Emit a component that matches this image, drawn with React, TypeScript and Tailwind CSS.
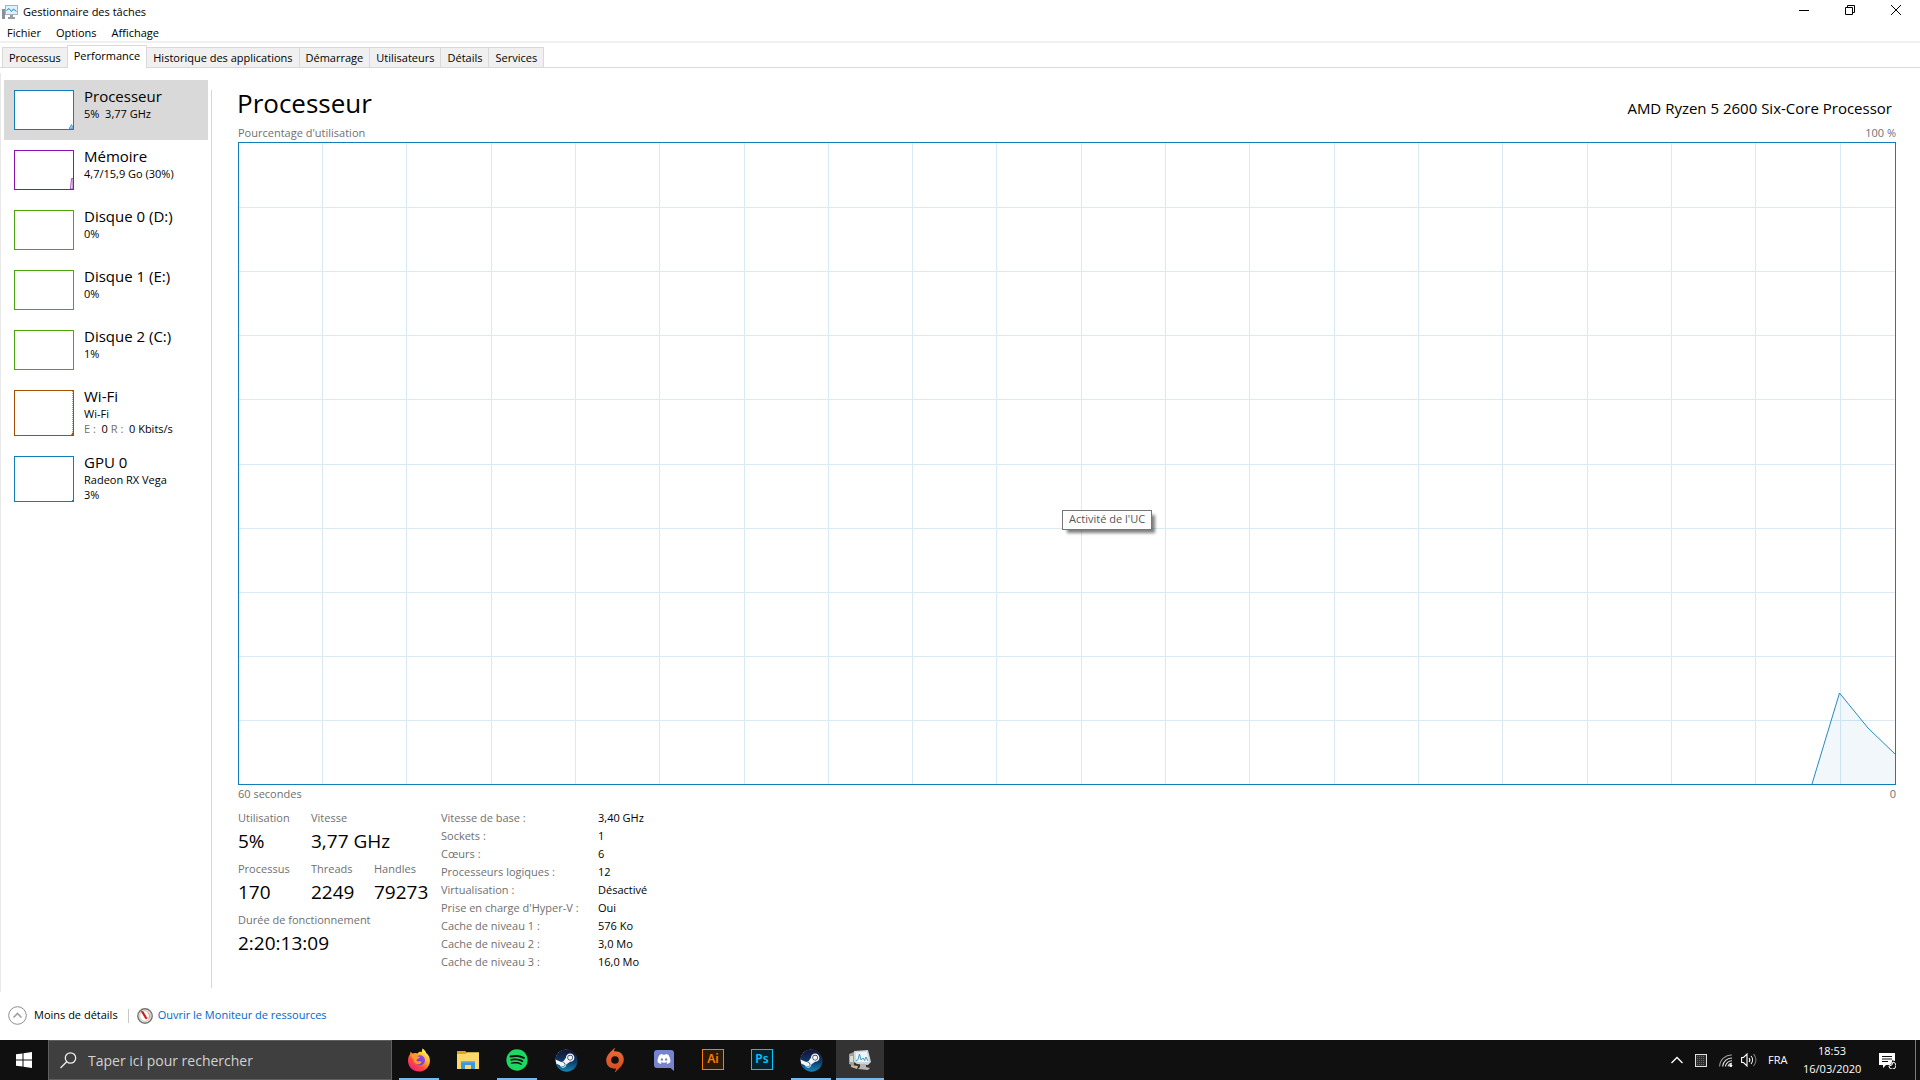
import type { ReactNode } from "react";
import { FaDiscord, FaSpotify, FaSteam } from "react-icons/fa";

type Resource = {
  name: string;
  lines: ReactNode[];
  border: string;
  trace?: ReactNode;
  tall?: boolean;
  selected?: boolean;
};

const resources: Resource[] = [
  {
    name: "Processeur",
    lines: ["5%  3,77 GHz"],
    border: "border-[#117dbb]",
    selected: true,
    trace: <path d="M54.5 38V37L56.5 33.5L58 36V38Z" fill="#9cc9e4" stroke="#4f9fce" />,
  },
  {
    name: "Mémoire",
    lines: ["4,7/15,9 Go (30%)"],
    border: "border-[#8b12ae]",
    trace: <path d="M55.5 38L56.5 27.5H58V38Z" fill="#f4f2f4" stroke="#a850c2" />,
  },
  { name: "Disque 0 (D:)", lines: ["0%"], border: "border-[#4da60c]" },
  { name: "Disque 1 (E:)", lines: ["0%"], border: "border-[#4da60c]" },
  { name: "Disque 2 (C:)", lines: ["1%"], border: "border-[#4da60c]" },
  {
    name: "Wi-Fi",
    lines: [
      "Wi-Fi",
      <>
        <span className="text-[#707070]">E : </span> 0 <span className="text-[#707070]">R : </span> 0 Kbits/s
      </>,
    ],
    border: "border-[#a74f01]",
    tall: true,
    trace: (
      <>
        <path d="M57.5 0V44" stroke="#cf9a70" strokeDasharray="1 1" />
        <path d="M56 44L58 41V44Z" fill="#a74f01" />
      </>
    ),
  },
  {
    name: "GPU 0",
    lines: ["Radeon RX Vega", "3%"],
    border: "border-[#117dbb]",
    tall: true,
    trace: <path d="M57 43H58V44H57Z" fill="#117dbb" />,
  },
];

const tabs = ["Processus", "Performance", "Historique des applications", "Démarrage", "Utilisateurs", "Détails", "Services"];

const details: [string, string][] = [
  ["Vitesse de base :", "3,40 GHz"],
  ["Sockets :", "1"],
  ["Cœurs :", "6"],
  ["Processeurs logiques :", "12"],
  ["Virtualisation :", "Désactivé"],
  ["Prise en charge d'Hyper-V :", "Oui"],
  ["Cache de niveau 1 :", "576 Ko"],
  ["Cache de niveau 2 :", "3,0 Mo"],
  ["Cache de niveau 3 :", "16,0 Mo"],
];

function MonitorIcon() {
  return (
    <svg className="h-4 w-4" viewBox="0 0 16 16" aria-hidden="true">
      <rect x="0" y="5" width="3" height="10" fill="#8d8f91" />
      <rect x="1" y="6" width="1" height="2" fill="#58c43c" />
      <rect x="3" y="1" width="13" height="10" fill="#a9b2b8" />
      <rect x="4" y="2" width="11" height="8" fill="#dff1fa" />
      <path d="M4.500 6.500L7 4.500L9.500 7.500L11.500 5L14.500 7.500" fill="none" stroke="#1b86c4" />
      <path d="M8 11H11V13H13V15H6V13H8Z" fill="#9a9c9e" />
    </svg>
  );
}

function TitleBar() {
  return (
    <header className="flex h-6 items-center justify-between pr-[1px] pl-[2px]">
      <div className="flex items-center gap-[5px]">
        <MonitorIcon />
        <h1>Gestionnaire des tâches</h1>
      </div>
      <div className="flex self-start">
        <button aria-label="Réduire" className="flex h-5 w-[46px] items-center justify-center">
          <svg width="10" height="10" viewBox="0 0 10 10"><path d="M0 5.500H10" stroke="#000" /></svg>
        </button>
        <button aria-label="Niveau inférieur" className="flex h-5 w-[46px] items-center justify-center">
          <svg width="10" height="10" viewBox="0 0 10 10"><path d="M0.500 2.500H7.500V9.500H0.500ZM2.500 2.500V0.500H9.500V7.500H7.500" fill="none" stroke="#000" /></svg>
        </button>
        <button aria-label="Fermer" className="flex h-5 w-[46px] items-center justify-center">
          <svg width="10" height="10" viewBox="0 0 10 10"><path d="M0 0L10 10M10 0L0 10" stroke="#000" /></svg>
        </button>
      </div>
    </header>
  );
}

function Tabs() {
  return (
    <div role="tablist" className="flex h-[25px] items-end border-b border-[#d9d9d9] pl-[2px]">
      {tabs.map((tab, i) =>
        i === 1 ? (
          <button key={tab} role="tab" aria-selected="true" className="-mb-px h-[23px] border border-b-0 border-[#d9d9d9] bg-white px-[6px] pb-[2px]">
            {tab}
          </button>
        ) : (
          <button key={tab} role="tab" aria-selected="false" className={`h-5 border-t border-r border-[#d9d9d9] bg-[#f0f0f0] px-[6px] pt-px ${i === 0 ? "border-r-0 border-l" : ""}`}>
            {tab}
          </button>
        ),
      )}
    </div>
  );
}

function Sidebar() {
  return (
    <nav aria-label="Ressources" className="flex w-[208px] shrink-0 flex-col pt-[7px] pr-[1px] pl-[3px]">
      {resources.map((r) => (
        <button
          key={r.name}
          className={`flex items-start gap-[10px] px-[10px] pt-[6px] text-left ${r.tall ? "h-[66px]" : "h-[60px]"} ${r.selected ? "bg-[#d9d9d9]" : ""}`}
        >
          <span className={`mt-1 block w-[60px] shrink-0 border bg-white ${r.border} ${r.tall ? "h-[46px]" : "h-10"}`}>
            <svg className="block h-full w-full" viewBox={r.tall ? "0 0 58 44" : "0 0 58 38"} aria-hidden="true">
              {r.trace}
            </svg>
          </span>
          <span className="flex flex-col whitespace-pre">
            <span className="text-[15px] leading-5">{r.name}</span>
            {r.lines.map((line, i) => (
              <span key={i} className="leading-[15px]">{line}</span>
            ))}
          </span>
        </button>
      ))}
    </nav>
  );
}

function Chart() {
  const columns = Array.from({ length: 19 }, (_, i) => Math.round(84.3 * (i + 1) - 1.2) + 0.5);
  const rows = Array.from({ length: 9 }, (_, i) => Math.round(64.1 * (i + 1)) + 0.5);
  return (
    <div className="relative min-h-[200px] flex-1 border border-[#117dbb]">
      <svg className="absolute inset-0 h-full w-full" viewBox="0 0 1656 641" preserveAspectRatio="none" role="img" aria-label="Pourcentage d'utilisation">
        <path
          d={columns.map((x) => `M${x} 0V641`).join("") + rows.map((y) => `M0 ${y}H1656`).join("")}
          stroke="#d9eaf4"
          vectorEffect="non-scaling-stroke"
          shapeRendering="crispEdges"
        />
        <path d="M1573 641L1600.500 550L1629 585L1656 611V641Z" fill="#117dbb" fillOpacity="0.06" />
        <path d="M1573 641L1600.500 550L1629 585L1656 611" fill="none" stroke="#117dbb" strokeOpacity="0.9" vectorEffect="non-scaling-stroke" />
      </svg>
      <div role="tooltip" className="absolute top-[57.2%] left-[49.7%] flex h-5 items-center border border-[#767676] bg-white px-[6px] text-[#575757] shadow-[4px_4px_3px_-1px_rgba(0,0,0,0.5)]">
        Activité de l'UC
      </div>
    </div>
  );
}

function Stat({ label, value, wide }: { label: string; value: string; wide?: string }) {
  return (
    <div className={`whitespace-nowrap ${wide ?? ""}`}>
      <dt className="leading-[18px] text-[#707070]">{label}</dt>
      <dd className="pb-[2px] text-[19px] leading-7">{value}</dd>
    </div>
  );
}

function Performance() {
  return (
    <main className="flex min-w-0 flex-1 flex-col pt-[12px] pr-6 pb-[21px] pl-[25px]">
      <div className="flex h-[39px] items-start justify-between">
        <h2 className="text-[26px] leading-9">Processeur</h2>
        <p className="pt-[6px] pr-1 text-[15px] leading-[34px]">AMD Ryzen 5 2600 Six-Core Processor</p>
      </div>
      <div className="flex flex-1 flex-col pl-px">
        <div className="flex justify-between leading-[18px] text-[#707070]">
          <span>Pourcentage d'utilisation</span>
          <span>100 %</span>
        </div>
        <Chart />
        <div className="flex justify-between leading-[18px] text-[#707070]">
          <span>60 secondes</span>
          <span>0</span>
        </div>
        <div className="flex items-start pt-[6px]">
          <dl className="grid grid-cols-[73px_63px_67px] gap-y-[3px]">
            <Stat label="Utilisation" value="5%" />
            <Stat label="Vitesse" value="3,77 GHz" wide="col-span-2" />
            <Stat label="Processus" value="170" />
            <Stat label="Threads" value="2249" />
            <Stat label="Handles" value="79273" />
            <Stat label="Durée de fonctionnement" value="2:20:13:09" wide="col-span-3" />
          </dl>
          <table className="leading-[18px]">
            <tbody>
              {details.map(([label, value]) => (
                <tr key={label}>
                  <th scope="row" className="w-[157px] p-0 text-left font-normal text-[#707070]">{label}</th>
                  <td className="p-0">{value}</td>
                </tr>
              ))}
            </tbody>
          </table>
        </div>
      </div>
    </main>
  );
}

function Footer() {
  return (
    <footer className="flex h-12 items-center pb-px pl-2">
      <button className="flex items-center gap-[7px]">
        <svg width="19" height="19" viewBox="0 0 19 19" aria-hidden="true">
          <circle cx="9.500" cy="9.500" r="8.800" fill="#fff" stroke="#8e8e8e" />
          <path d="M5.500 11.500L9.500 7.500L13.500 11.500" fill="none" stroke="#a0a0a0" strokeWidth="1.600" />
        </svg>
        Moins de détails
      </button>
      <span className="mr-2 ml-[10px] h-[14px] w-px bg-[#c8c8c8]" />
      <a href="#moniteur" className="flex items-center gap-[5px] text-[#0066cc]">
        <svg width="16" height="16" viewBox="0 0 16 16" aria-hidden="true">
          <circle cx="8" cy="8" r="7.200" fill="#f3f0ec" stroke="#77736f" strokeWidth="1.400" />
          <circle cx="8" cy="8" r="5.300" fill="#fff" stroke="#c9c3bb" />
          <path d="M10.500 4.500A4 4 0 0 1 11.500 10.500" fill="none" stroke="#c49a78" />
          <path d="M4.200 3.200L6.200 3.800L10.200 10.500L8.600 10.800Z" fill="#d40f0f" stroke="#d40f0f" strokeWidth="0.700" />
        </svg>
        Ouvrir le Moniteur de ressources
      </a>
    </footer>
  );
}

function FirefoxIcon() {
  return (
    <svg width="24" height="24" viewBox="0 0 24 24">
      <defs>
        <linearGradient id="ff-body" x1="0.850" y1="0.050" x2="0.200" y2="0.950">
          <stop offset="0.100" stopColor="#fff04a" />
          <stop offset="0.400" stopColor="#ffa62b" />
          <stop offset="0.680" stopColor="#ff4a3d" />
          <stop offset="1" stopColor="#e8207c" />
        </linearGradient>
        <linearGradient id="ff-globe" x1="0" y1="1" x2="1" y2="0">
          <stop offset="0" stopColor="#4b3fd6" />
          <stop offset="1" stopColor="#a649e8" />
        </linearGradient>
      </defs>
      <path d="M15.600 0.500C18 2.200 18.800 4 19.200 5C21.800 7 23.200 10 22.900 13.500C22.400 19.500 17.800 23.600 12 23.600C5.800 23.600 1 19 1 12.800C1 10 1.800 8 3 6.300L3.600 3.800L5.600 5.600C7.600 4.700 9.300 5 10.400 5.600C11.800 3.600 13.600 3.600 15 4.200C14.900 2.800 15 1.500 15.600 0.500Z" fill="url(#ff-body)" />
      <circle cx="13" cy="12.300" r="5" fill="url(#ff-globe)" />
      <path d="M3.200 7C5.500 6 8 6.500 9.500 8L13 9C12.500 10.600 10.500 10.500 9.700 11.800C9.200 13 10.500 13.800 12.500 13.300C14 13 15 13.600 14.500 14.500C13 17 9.500 16.800 7.500 14.500C6 12.500 6.300 11 5.500 9.800Z" fill="#ff9a2a" />
    </svg>
  );
}

function FolderIcon() {
  return (
    <svg width="24" height="24" viewBox="0 0 24 24">
      <path d="M1 3H9.500L11 5H22V20H1Z" fill="#e2a30f" />
      <path d="M1 6H9.500L11 4.200H23V21H1Z" fill="#ffd869" />
      <path d="M5 13H19V21H15V17H9V21H5Z" fill="#3d97dc" />
      <path d="M5 13H19V14.500H5Z" fill="#5fb3ee" />
    </svg>
  );
}

function SteamIcon() {
  return (
    <span className="relative flex h-6 w-6 items-center justify-center">
      <svg className="absolute h-6 w-6" viewBox="0 0 24 24">
        <defs>
          <linearGradient id="steam" x1="0" y1="0" x2="0" y2="1">
            <stop offset="0.100" stopColor="#14183c" />
            <stop offset="0.550" stopColor="#0c3a69" />
            <stop offset="1" stopColor="#1387b8" />
          </linearGradient>
        </defs>
        <circle cx="12" cy="12" r="10.500" fill="#f4f4f4" />
      </svg>
      <FaSteam className="relative h-[23px] w-[23px]" fill="url(#steam)" />
    </span>
  );
}

function OriginIcon() {
  return (
    <svg width="24" height="24" viewBox="0 0 24 24">
      <defs>
        <linearGradient id="origin" x1="0" y1="0" x2="0" y2="1">
          <stop offset="0" stopColor="#ee6b3c" />
          <stop offset="1" stopColor="#d24a1c" />
        </linearGradient>
      </defs>
      <path
        fillRule="evenodd"
        fill="url(#origin)"
        d="M12.200 0.300C11.300 1.500 11 2.500 11 3.400C17 3 20.800 6.600 20.800 11.600C20.800 17 16 20.500 12.700 23.900H11.800C12.700 22.500 13 21.500 13 20.600C7 21 3.200 17.400 3.200 12.400C3.200 7 8.200 3.500 11.300 0.300ZM12 8.200A3.800 3.800 0 1 0 12 15.800A3.800 3.800 0 1 0 12 8.200Z"
      />
    </svg>
  );
}

function DiscordIcon() {
  return (
    <span className="relative flex h-6 w-6 items-center justify-center">
      <svg className="absolute h-6 w-6" viewBox="0 0 24 24">
        <path d="M5 2H19C21 2 22 3 22 5V23L18.500 20H5C3 20 2 19 2 17V5C2 3 3 2 5 2Z" fill="#7683cf" />
      </svg>
      <FaDiscord className="relative mb-0.5 h-[14px] w-[14px] text-white" />
    </span>
  );
}

function AdobeIcon({ text, frame }: { text: string; frame: string }) {
  return (
    <span className={`mb-[2px] flex h-[21px] w-[22px] items-center justify-center border font-['Noto_Sans'] text-[12px] leading-none font-semibold ${frame}`}>
      {text}
    </span>
  );
}

function TaskManagerIcon() {
  return (
    <svg width="24" height="24" viewBox="0 0 24 24">
      <path d="M1 6L6 4V18L1 16Z" fill="#9fa19f" />
      <path d="M2 8H5V14H2Z" fill="#d9dbd8" />
      <path d="M6 3L20 2L23 14L20 17L9 16L6 14Z" fill="#d2d4d2" />
      <path d="M7.500 4.500L18.800 3.500L21 14H8.500Z" fill="#eaf5fb" />
      <path d="M8 13L10 11.500L11.500 6L13 12L15 10L16.500 12.500L18 9L20 13" fill="none" stroke="#3f93c8" />
      <path d="M12 16H18V19L22 20L20 22L10 21L12 19Z" fill="#b5b6b4" />
      <path d="M3 17L10 18L9 21L3 19Z" fill="#cdb98f" />
    </svg>
  );
}

const apps: { name: string; icon: ReactNode; running?: boolean; active?: boolean }[] = [
  { name: "Firefox", icon: <FirefoxIcon />, running: true },
  { name: "Explorateur de fichiers", icon: <FolderIcon /> },
  {
    name: "Spotify",
    icon: (
      <span className="flex h-6 w-6 items-center justify-center">
        <FaSpotify className="h-[22px] w-[22px] text-[#1ed760]" />
      </span>
    ),
    running: true,
  },
  { name: "Steam", icon: <SteamIcon /> },
  { name: "Origin", icon: <OriginIcon /> },
  { name: "Discord", icon: <DiscordIcon /> },
  { name: "Illustrator", icon: <AdobeIcon text="Ai" frame="border-[#ff7c00] bg-[#2a1a08] text-[#ff7c00]" /> },
  { name: "Photoshop", icon: <AdobeIcon text="Ps" frame="border-[#00c8ff] bg-[#06222c] text-[#00c8ff]" /> },
  { name: "Bibliothèque Steam", icon: <SteamIcon />, running: true },
  { name: "Gestionnaire des tâches", icon: <TaskManagerIcon />, active: true },
];

function Taskbar() {
  return (
    <div className="flex h-10 bg-[#101010] text-white">
      <button aria-label="Démarrer" className="flex w-12 items-center justify-center">
        <svg width="16" height="16" viewBox="0 0 16 16">
          <path d="M0 2.300L6.500 1.400V7.500H0ZM7.500 1.200L16 0V7.500H7.500ZM0 8.500H6.500V14.600L0 13.700ZM7.500 8.500H16V16L7.500 14.800Z" fill="#fff" />
        </svg>
      </button>
      <label className="flex w-[344px] items-center gap-[11px] border border-[#5f5f5f] bg-[#3f3f3f] pl-[11px]">
        <svg width="17" height="17" viewBox="0 0 17 17" aria-hidden="true">
          <circle cx="10.500" cy="6" r="5.200" fill="none" stroke="#eee" strokeWidth="1.300" />
          <path d="M6.700 9.800L0.500 16" stroke="#eee" strokeWidth="1.300" />
        </svg>
        <input aria-label="Rechercher" placeholder="Taper ici pour rechercher" className="min-w-0 flex-1 bg-transparent text-[14px] outline-none placeholder:text-[#d2d2d2]" />
      </label>
      <div className="ml-[3px] flex gap-px">
        {apps.map((app) => (
          <button
            key={app.name}
            aria-label={app.name}
            className={`relative flex w-12 items-center justify-center ${app.active ? "bg-[#333333]" : ""}`}
          >
            {app.icon}
            {app.running && <span className="absolute inset-x-1 bottom-0 h-0.5 bg-[#76b9ed]" />}
            {app.active && <span className="absolute inset-x-0 bottom-0 h-0.5 bg-[#76b9ed]" />}
          </button>
        ))}
      </div>
      <div className="ml-auto flex items-center">
        <button aria-label="Afficher les icônes cachées" className="mr-3">
          <svg width="12" height="12" viewBox="0 0 12 12"><path d="M0.500 9L6 3.500L11.500 9" fill="none" stroke="#fff" strokeWidth="1.300" /></svg>
        </button>
        <svg className="mr-3" width="12" height="13" viewBox="0 0 12 13" aria-hidden="true">
          <rect x="0.500" y="0.500" width="11" height="12" fill="#2c2c2c" stroke="#e0e0e0" />
          <path d="M2 2.500H10M2 4.500H10M2 6.500H10M2 8.500H10M2 10.500H10" stroke="#6a6a6a" strokeDasharray="1 1" />
        </svg>
        <svg className="mr-2" width="14" height="14" viewBox="0 0 14 14" aria-hidden="true">
          <g fill="none" stroke="#e8e8e8" strokeWidth="1.100">
            <path d="M0.600 13.500A12 12 0 0 1 13 2" stroke="#9a9a9a" />
            <path d="M3.600 13.500A9.200 9.200 0 0 1 13 5" />
            <path d="M6.400 13.500A6.600 6.600 0 0 1 13 7.800" />
            <path d="M9 13.500A4.200 4.200 0 0 1 13 10.200" />
          </g>
          <circle cx="11.800" cy="12.500" r="1.500" fill="#fff" />
        </svg>
        <svg className="mr-[11px]" width="16" height="14" viewBox="0 0 16 14" aria-hidden="true">
          <path d="M0.600 4.500H2.500L6 1V13L2.500 9.500H0.600Z" fill="none" stroke="#fff" strokeWidth="1.100" />
          <path d="M8 5A3 3 0 0 1 8 9M10 3A6 6 0 0 1 10 11" fill="none" stroke="#fff" strokeWidth="1.100" />
          <path d="M12.500 1A8.500 8.500 0 0 1 12.500 13" fill="none" stroke="#777" strokeWidth="1.100" />
        </svg>
        <span className="w-[35px]">FRA</span>
        <time className="flex w-[58px] flex-col text-center leading-[18px]">
          <span>18:53</span>
          <span>16/03/2020</span>
        </time>
        <button aria-label="Notifications" className="ml-[18px]">
          <svg width="17" height="17" viewBox="0 0 17 17">
            <path d="M0 1H16V13H7L4 16V13H0Z" fill="#fff" />
            <path d="M3 4.500H13M3 7H13M3 9.500H9" stroke="#101010" />
            <path d="M14 9.500A4 4 0 1 1 9.500 14.500A5 5 0 0 0 14 9.500Z" fill="#101010" stroke="#101010" strokeWidth="2" />
            <path d="M14 10A3.600 3.600 0 1 1 9.800 14.200A4.500 4.500 0 0 0 14 10Z" fill="#101010" stroke="#fff" />
          </svg>
        </button>
        <button aria-label="Afficher le Bureau" className="ml-[19px] h-10 w-[5px] border-l border-[#7a7a7a]" />
      </div>
    </div>
  );
}

export default function App() {
  return (
    <div className="flex min-h-screen flex-col bg-white font-['Open_Sans',sans-serif] text-[11px] text-black">
      <TitleBar />
      <nav aria-label="Menu" className="flex h-[17px] items-center gap-[15px] pt-[2px] pl-[7px]">
        <button>Fichier</button>
        <button>Options</button>
        <button>Affichage</button>
      </nav>
      <div className="h-0.5 bg-[#f0f0f0]" />
      <Tabs />
      <div className="mt-[5px] flex flex-1 border-l border-[#e8e8e8]">
        <Sidebar />
        <div className="mt-[17px] mb-1 ml-[2px] w-px bg-[#d5d9dc]" />
        <Performance />
      </div>
      <Footer />
      <Taskbar />
    </div>
  );
}
